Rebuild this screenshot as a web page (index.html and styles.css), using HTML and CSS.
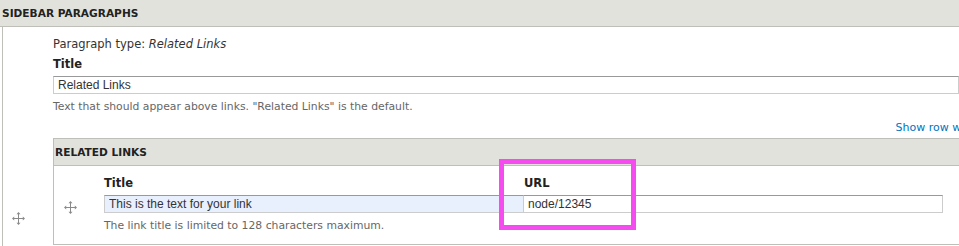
FILE: index.html
```html
<!DOCTYPE html>
<html>
<head>
    <title>Sidebar Paragraphs</title>
    <link rel="stylesheet" href="styles.css">
</head>
<body>
    <div class="field-table">
        <div class="field-head">SIDEBAR PARAGRAPHS</div>
        <div class="field-row">
            <div class="drag-cell outer-drag">
                <svg class="drag-icon" width="13" height="13" viewBox="0 0 13 13">
                    <path d="M6.5 1v11M1 6.5h11" stroke="#8a8a8a" stroke-width="1"/>
                    <path d="M6.5 0l-2 2.2h4zM6.5 13l-2-2.2h4zM0 6.5l2.2-2v4zM13 6.5l-2.2-2v4z" fill="#8a8a8a"/>
                </svg>
            </div>
            <div class="field-body">
                <p class="para-type">Paragraph type: <em>Related Links</em></p>
                <label class="field-label">Title</label>
                <input class="text-input" type="text" value="Related Links">
                <p class="description">Text that should appear above links. "Related Links" is the default.</p>

                <div class="row-weights"><a href="#">Show row weights</a></div>

                <div class="sub-table">
                    <div class="sub-head">RELATED LINKS</div>
                    <div class="sub-row">
                        <div class="drag-cell inner-drag">
                            <svg class="drag-icon" width="13" height="13" viewBox="0 0 13 13">
                                <path d="M6.5 1v11M1 6.5h11" stroke="#8a8a8a" stroke-width="1"/>
                                <path d="M6.5 0l-2 2.2h4zM6.5 13l-2-2.2h4zM0 6.5l2.2-2v4zM13 6.5l-2.2-2v4z" fill="#8a8a8a"/>
                            </svg>
                        </div>
                        <div class="link-cell title-cell">
                            <label class="field-label">Title</label>
                            <input class="text-input autofill" type="text" value="This is the text for your link">
                            <p class="description">The link title is limited to 128 characters maximum.</p>
                        </div>
                        <div class="link-cell url-cell">
                            <label class="field-label">URL</label>
                            <input class="text-input" type="text" value="node/12345">
                        </div>
                    </div>
                </div>
            </div>
        </div>
    </div>

    <div class="highlight"></div>
</body>
</html>
```

FILE: styles.css
```css
* {
    margin: 0;
    padding: 0;
    box-sizing: border-box;
}

body {
    font-family: "DejaVu Sans", Verdana, sans-serif;
    font-size: 11.5px;
    color: #333;
    background: white;
    overflow: hidden;
}

.field-head,
.sub-head {
    background: #e1e2dc;
    border-bottom: 1px solid #bebfb9;
    font-weight: bold;
    font-size: 10.6px;
    color: #222;
    text-transform: uppercase;
}

.field-head {
    height: 27px;
    line-height: 26px;
    padding-left: 2px;
}

.field-row {
    display: flex;
    margin-left: 2px;
    border-left: 1px solid #bebfb9;
    min-height: 230px;
}

.drag-cell {
    flex: none;
}

.outer-drag {
    width: 50px;
    padding: 185px 0 0 9px;
}

.drag-icon {
    display: block;
}

.field-body {
    flex: 1;
    padding-top: 9px;
}

.para-type {
    line-height: 17px;
}

.field-label {
    display: block;
    font-weight: bold;
    color: #222;
    line-height: 17px;
    margin-top: 3px;
    margin-bottom: 3px;
}

.text-input {
    display: block;
    width: 100%;
    height: 18px;
    border: 1px solid #ccc;
    border-top-color: #999;
    padding: 0 4px;
    font-family: "Liberation Sans", Arial, sans-serif;
    font-size: 12px;
    color: #333;
    background: white;
    outline: none;
}

.description {
    font-size: 10.8px;
    color: #666;
    line-height: 14px;
    margin-top: 6px;
}

.row-weights {
    text-align: right;
    margin-top: 5px;
    height: 17px;
    line-height: 17px;
    white-space: nowrap;
    margin-right: -36px;
    font-size: 11px;
}

.row-weights a {
    color: #0074bd;
    text-decoration: none;
}

.sub-table {
    border-top: 1px solid #bebfb9;
    border-left: 1px solid #bebfb9;
    border-bottom: 1px solid #bebfb9;
    margin-top: 2px;
}

.sub-head {
    height: 27px;
    line-height: 26px;
    padding-left: 1px;
}

.sub-row {
    display: flex;
    height: 78px;
}

.inner-drag {
    width: 50px;
    padding: 35px 0 0 10px;
}

.link-cell {
    padding-top: 6px;
}

.title-cell {
    width: 419px;
}

.title-cell .text-input {
    border-right: none;
}

.autofill {
    background: #e8f0fe;
}

.url-cell {
    width: 420px;
}

.url-cell .field-label {
    padding-left: 1px;
}

.highlight {
    position: absolute;
    left: 499px;
    top: 159px;
    width: 137px;
    height: 71px;
    border: 5px solid #f54cf0;
}
```
